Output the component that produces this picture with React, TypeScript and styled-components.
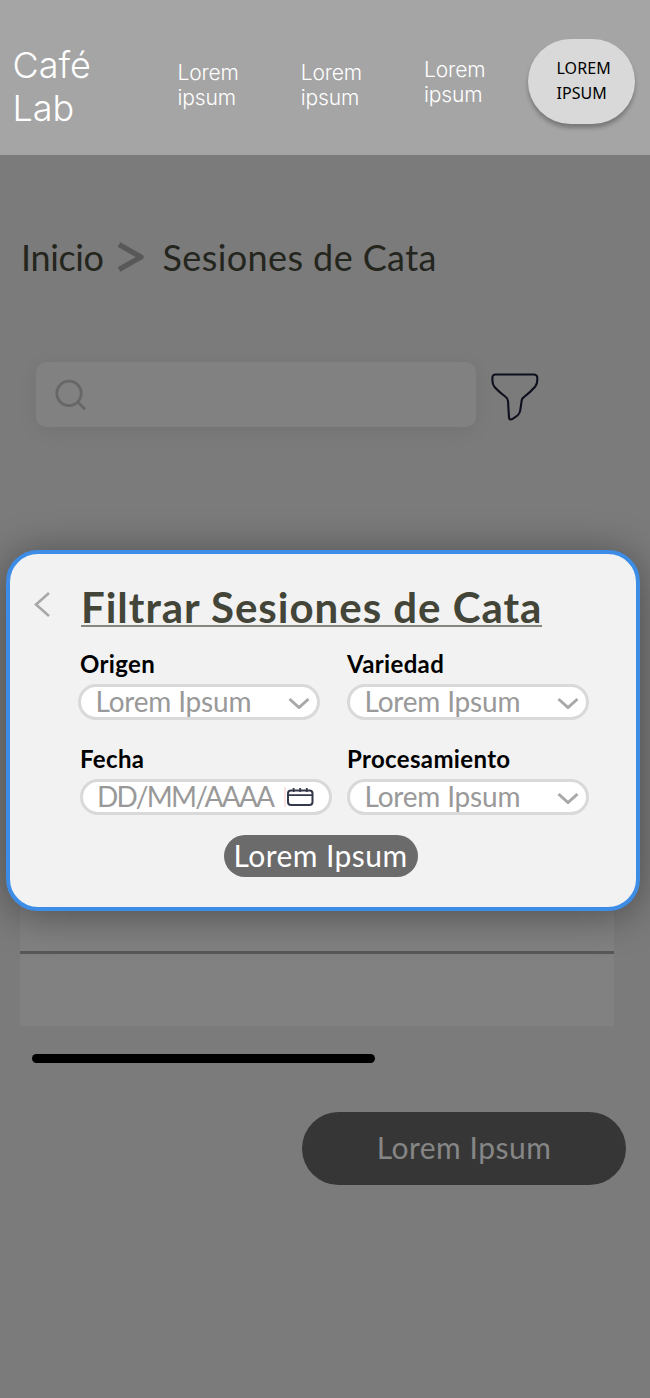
import React from "react";
import styled, { createGlobalStyle } from "styled-components";

const GlobalStyle = createGlobalStyle`
  *, *::before, *::after { box-sizing: border-box; }
  body { margin: 0; background: #7b7b7b; font-family: Lato, "Noto Sans", sans-serif; }
  button { border: 0; padding: 0; font: inherit; cursor: pointer; }
  svg { display: block; flex: none; }
`;

const Page = styled.div`
  position: relative;
  width: 650px;
  height: 1398px;
  overflow: hidden;
  background: #7b7b7b;
`;

const Header = styled.header`
  display: flex;
  align-items: flex-start;
  height: 155px;
  padding-left: 12.5px;
  background: #a5a5a5;
  color: #fff;
  font-family: Inter, sans-serif;
`;

const Brand = styled.div`
  width: 165px;
  margin-top: 43.5px;
  font-size: 36px;
  line-height: 43px;
  font-weight: 350;
  letter-spacing: 0;
`;

const NavItem = styled.a<{ $top?: number }>`
  width: 123.3px;
  margin-top: ${(p) => p.$top ?? 59.5}px;
  font-size: 21px;
  line-height: 25.3px;
  font-weight: 350;
  letter-spacing: -0.15px;
`;

const AccountButton = styled.button`
  width: 107px;
  height: 85px;
  margin: 39px 0 0 -19.5px;
  padding: 0 0 2px 28.5px;
  border-radius: 43px;
  background: #d9d9d9;
  box-shadow: 0 4px 4px rgba(0, 0, 0, 0.27);
  color: #000;
  font: 16px/25px "Noto Sans", sans-serif;
  letter-spacing: 0.1px;
  text-align: left;
`;

const Breadcrumb = styled.nav`
  display: flex;
  margin-top: 80px;
  padding-left: 21px;
  color: #24251d;
  font-size: 36px;
  line-height: 44px;
`;

const Crumb = styled.span<{ $width: number; $spacing: number }>`
  width: ${(p) => p.$width}px;
  letter-spacing: ${(p) => p.$spacing}px;
  white-space: nowrap;
`;

const CrumbArrow = styled.svg`
  margin: 6px 18.5px 0 0;
`;

const SearchRow = styled.div`
  display: flex;
  gap: 14px;
  margin: 82.5px 0 0 36px;
`;

const SearchBox = styled.div`
  width: 440px;
  height: 65.5px;
  padding: 17px 0 0 18px;
  border-radius: 10px;
  background: #818181;
  box-shadow: 0 4px 20px rgba(0, 0, 0, 0.07);
`;

const FunnelIcon = styled.svg`
  margin-top: 10.5px;
`;

const Table = styled.div`
  width: 594px;
  height: 426px;
  margin: 173px 0 0 20px;
  padding-top: 351px;
  background: #818181;
`;

const TableRule = styled.div`
  height: 3px;
  background: #585858;
`;

const ScrollThumb = styled.div`
  width: 343px;
  height: 9px;
  margin: 28px 0 0 32px;
  border-radius: 5px;
  background: #000;
`;

const PrimaryButton = styled.button`
  display: block;
  width: 324px;
  height: 73px;
  margin: 49px 0 0 302px;
  padding-bottom: 3px;
  border-radius: 37px;
  background: #363636;
  color: #868686;
  font-size: 30px;
  letter-spacing: 0.5px;
`;

const Modal = styled.section`
  position: absolute;
  top: 550px;
  left: 6px;
  width: 634px;
  height: 361px;
  padding: 28px 0 0 24px;
  border: 4px solid #3d8ce6;
  border-radius: 32px;
  background: #f2f2f2;
  box-shadow: 0 4px 40px rgba(0, 0, 0, 0.4);
`;

const ModalHeader = styled.div`
  display: flex;
  height: 63px;
`;

const BackIcon = styled.svg`
  margin: 8.5px 31px 0 0;
`;

const Title = styled.h1`
  width: 461px;
  height: 45px;
  margin: 0;
  border-bottom: 2px solid #85867d;
  color: #434538;
  font-size: 42px;
  line-height: 50px;
  font-weight: 700;
  letter-spacing: 0.98px;
  white-space: nowrap;
`;

const Fields = styled.div`
  display: grid;
  grid-template-columns: 269px 1fr;
  grid-auto-rows: 95px;
  padding-left: 44px;
`;

const Label = styled.div<{ $indent?: number }>`
  height: 39px;
  padding: 3px 0 0 ${(p) => p.$indent ?? 0}px;
  color: #000;
  font-size: 24px;
  line-height: 31px;
  font-weight: 700;
  letter-spacing: 0.35px;
  white-space: nowrap;
`;

const Control = styled.div<{ $wide?: boolean }>`
  display: flex;
  align-items: center;
  justify-content: space-between;
  width: ${(p) => (p.$wide ? 252 : 242)}px;
  height: 36px;
  margin-left: ${(p) => (p.$wide ? 1.5 : 0)}px;
  padding: 0 ${(p) => (p.$wide ? 15 : 7)}px 0 14.5px;
  border: 3px solid #d9d9d9;
  border-radius: 18px;
  background: #fff;
`;

const Value = styled.span<{ $spacing?: number }>`
  margin-top: -2px;
  color: #999;
  font-size: 28px;
  line-height: 30px;
  font-weight: 400;
  letter-spacing: ${(p) => p.$spacing ?? -0.2}px;
  white-space: nowrap;
`;

const SubmitButton = styled.button`
  display: block;
  width: 194px;
  height: 42px;
  margin: 0 0 0 189.5px;
  padding-bottom: 2px;
  border-radius: 21px;
  background: #6b6b6b;
  color: #fff;
  font-size: 30px;
  letter-spacing: 0.45px;
  line-height: 40px;
  white-space: nowrap;
`;

const Chevron = () => (
  <svg width="22" height="14" viewBox="0 0 22 14" fill="none" stroke="#a8a8a8" strokeWidth="3">
    <path d="M1.5 4 11 12.5 20.5 4" />
  </svg>
);

const Calendar = () => (
  <svg width="30" height="22" viewBox="0 0 30 22" fill="none" stroke="#33384a" strokeWidth="2">
    <path d="M1 1v20" stroke="#fde3e3" />
    <rect x="4" y="4.5" width="24.5" height="14.5" rx="3" />
    <path d="M4 9.2h24.5M9.6 2v4M16.2 2v4M22.8 2v4" strokeWidth="1.8" />
  </svg>
);

const Select = ({ label, indent }: { label: string; indent?: number }) => (
  <div>
    <Label $indent={indent}>{label}</Label>
    <Control>
      <Value>Lorem Ipsum</Value>
      <Chevron />
    </Control>
  </div>
);

export default function App() {
  return (
    <Page>
      <GlobalStyle />
      <Header>
        <Brand>Café<br />Lab</Brand>
        <NavItem>Lorem<br />ipsum</NavItem>
        <NavItem>Lorem<br />ipsum</NavItem>
        <NavItem $top={56.5}>Lorem<br />ipsum</NavItem>
        <AccountButton>LOREM<br />IPSUM</AccountButton>
      </Header>
      <Breadcrumb>
        <Crumb $width={96} $spacing={-0.35}>Inicio</Crumb>
        <CrumbArrow width="27" height="32" viewBox="0 0 27 32" fill="none" stroke="#585858" strokeWidth="5.4" strokeLinejoin="round">
          <path d="M2 3.5 24 16 2 28.5" />
        </CrumbArrow>
        <Crumb $width={280} $spacing={0.4}>Sesiones de Cata</Crumb>
      </Breadcrumb>
      <SearchRow>
        <SearchBox>
          <svg width="34" height="34" viewBox="0 0 34 34" fill="none" stroke="#676767" strokeWidth="2.8" strokeLinecap="round">
            <circle cx="15" cy="14.3" r="12.2" />
            <path d="m24 23.3 6.3 6.3" />
          </svg>
        </SearchBox>
        <FunnelIcon width="50" height="50" viewBox="0 0 50 50" fill="none" stroke="#0d0f1e" strokeWidth="2.1" strokeLinejoin="round">
          <path d="M5.5 2.5H43.5Q47.3 2.5 47.3 6V8Q47.3 11.5 45.3 14.5 40 20.5 33.5 25.5 31.7 26.5 31.6 29L30.3 38Q30 41.3 27.5 43.5L23 46.6Q19.4 48.8 19 45.5L18 29Q18 26.5 15.8 25 9.5 20.5 4.5 15 2.4 12 2.4 8.5V6Q2.4 2.5 5.5 2.5Z" />
        </FunnelIcon>
      </SearchRow>
      <Table>
        <TableRule />
      </Table>
      <ScrollThumb />
      <PrimaryButton>Lorem Ipsum</PrimaryButton>

      <Modal>
        <ModalHeader>
          <BackIcon width="16" height="26" viewBox="0 0 16 26" fill="none" stroke="#a8a8a8" strokeWidth="2.6">
            <path d="M15 2 2 13.5 15 25" />
          </BackIcon>
          <Title>Filtrar Sesiones de Cata</Title>
        </ModalHeader>
        <Fields>
          <Select label="Origen" indent={2} />
          <Select label="Variedad" />
          <div>
            <Label $indent={2}>Fecha</Label>
            <Control $wide>
              <Value $spacing={-1.75}>DD/MM/AAAA</Value>
              <Calendar />
            </Control>
          </div>
          <Select label="Procesamiento" />
        </Fields>
        <SubmitButton>Lorem Ipsum</SubmitButton>
      </Modal>
    </Page>
  );
}
